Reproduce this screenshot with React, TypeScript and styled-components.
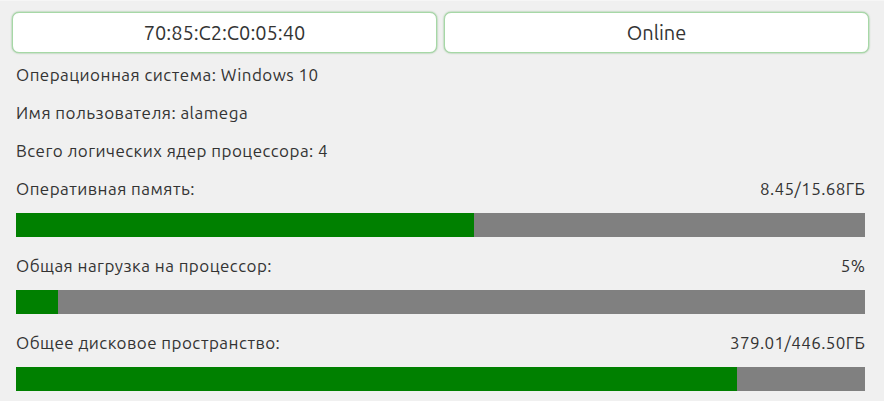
import styled, { createGlobalStyle } from 'styled-components';

const Global = createGlobalStyle`
  html, body {
    margin: 0;
    padding: 0;
    background: #f0f0f0;
  }
  body {
    font-family: Ubuntu, "Open Sans", "Noto Sans", sans-serif;
    color: #333;
  }
`;

const Page = styled.div`
  padding: 11px 15px 0 12px;
  border-top: 1px solid #f6f6f6;
`;

const Header = styled.div`
  display: grid;
  grid-template-columns: 1fr 1fr;
  gap: 7px;
`;

const Chip = styled.div`
  height: 39px;
  display: flex;
  align-items: center;
  justify-content: center;
  background: #fff;
  border: 1px solid #a6d8a6;
  border-radius: 7px;
  box-shadow: 0 0 2px rgba(0, 128, 0, 0.55);
  font-size: 20px;
  color: #333;
`;

const Body = styled.div`
  padding: 3px 4px 0 4px;
`;

const Line = styled.div`
  display: flex;
  justify-content: space-between;
  line-height: 38px;
  font-size: 17px;
`;

const Label = styled.span`
  letter-spacing: 0.45px;
`;

const Value = styled.span`
  letter-spacing: 0.4px;
  margin-right: -0.4px;
`;

const Track = styled.div`
  height: 24px;
  background: #808080;
  margin: 5px 0 10px;
`;

const Fill = styled.div`
  height: 100%;
  background: #008000;
`;

const meters = [
  { label: 'Оперативная память:', value: '8.45/15.68ГБ', ratio: 8.45 / 15.68 },
  { label: 'Общая нагрузка на процессор:', value: '5%', ratio: 0.05 },
  { label: 'Общее дисковое пространство:', value: '379.01/446.50ГБ', ratio: 379.01 / 446.5 },
];

export default function App() {
  return (
    <>
      <Global />
      <Page>
        <Header>
          <Chip>70:85:C2:C0:05:40</Chip>
          <Chip>Online</Chip>
        </Header>
        <Body>
          <Line><Label>Операционная система: Windows 10</Label></Line>
          <Line><Label>Имя пользователя: alamega</Label></Line>
          <Line><Label>Всего логических ядер процессора: 4</Label></Line>
          {meters.map((m) => (
            <div key={m.label}>
              <Line>
                <Label>{m.label}</Label>
                <Value>{m.value}</Value>
              </Line>
              <Track>
                <Fill style={{ width: `${m.ratio * 100}%` }} />
              </Track>
            </div>
          ))}
        </Body>
      </Page>
    </>
  );
}
